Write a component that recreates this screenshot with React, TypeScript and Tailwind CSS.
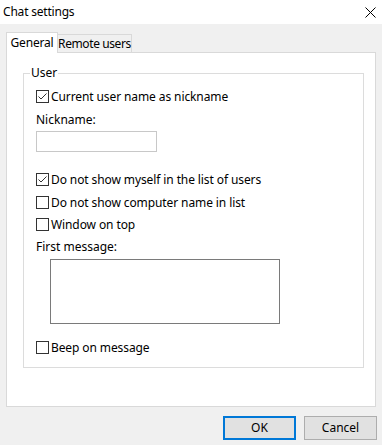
import React from "react";

const font = { fontFamily: '"Noto Sans", "Segoe UI", Arial, sans-serif' };

function Check({ checked, label, mt }: { checked?: boolean; label: string; mt: string }) {
  return (
    <div className={`flex items-center h-[13px] ${mt}`}>
      <div className="w-[13px] h-[13px] border border-[#333333] bg-white flex items-center justify-center shrink-0">
        {checked && (
          <svg width="11" height="11" viewBox="0 0 11 11">
            <polyline points="1.5,5.5 4,8 9.5,2.5" fill="none" stroke="#333333" strokeWidth="1" />
          </svg>
        )}
      </div>
      <span className="ml-[2px] text-[12px] leading-[13px] text-black whitespace-nowrap tracking-[-0.1px]">{label}</span>
    </div>
  );
}

export default function App() {
  return (
    <div className="w-[382px] h-[445px] bg-[#f0f0f0] flex flex-col overflow-hidden" style={font}>
      <div className="h-[24px] bg-white flex items-center justify-between pl-[3px] pr-[6px] shrink-0">
        <span className="text-[12px] text-black tracking-[-0.2px]">Chat settings</span>
        <svg width="11" height="11" viewBox="0 0 11 11">
          <path d="M0.5,0.5 L10.5,10.5 M10.5,0.5 L0.5,10.5" stroke="#000" strokeWidth="1" />
        </svg>
      </div>
      <div className="pl-[6px] pt-[8px] w-[376px]">
        <div className="flex items-end h-[20px] relative z-10">
          <div className="h-[21px] w-[52px] bg-white border border-b-0 border-[#d9d9d9] text-[12px] flex items-center justify-center -mb-[1px] whitespace-nowrap tracking-[-0.2px]">
            General
          </div>
          <div className="h-[18px] w-[74px] bg-[#f0f0f0] border border-l-0 border-b-0 border-[#d9d9d9] text-[12px] flex items-center justify-center whitespace-nowrap tracking-[-0.4px]">
            Remote users
          </div>
        </div>
        <div className="h-[355px] w-[370px] bg-white border border-[#d9d9d9] pt-[20px] pl-[16px]">
          <div className="relative w-[341px] h-[295px] border border-[#dcdcdc] pl-[12px] flex flex-col">
            <span className="absolute left-[6px] -top-[9px] bg-white px-[1px] text-[12px] leading-[16px]">User</span>
            <Check checked label="Current user name as nickname" mt="mt-[16px]" />
            <div className="mt-[9px] text-[12px] leading-[16px]">Nickname:</div>
            <div className="mt-[3px] w-[121px] h-[21px] border border-[#c8c8c8] bg-white" />
            <Check checked label="Do not show myself in the list of users" mt="mt-[21px]" />
            <Check label="Do not show computer name in list" mt="mt-[10px]" />
            <Check label="Window on top" mt="mt-[9px]" />
            <div className="mt-[8px] text-[12px] leading-[16px]">First message:</div>
            <div className="mt-[4px] ml-[14px] w-[230px] h-[65px] border border-[#7a7a7a] bg-white" />
            <Check label="Beep on message" mt="mt-[17px]" />
          </div>
        </div>
      </div>
      <div className="flex justify-end gap-[8px] pr-[5px] mt-[9px]">
        <button className="w-[73px] h-[24px] bg-[#e1e1e1] border-2 border-[#0078d7] text-[12px] text-black">OK</button>
        <button className="w-[73px] h-[24px] bg-[#e1e1e1] border border-[#adadad] text-[12px] text-black">Cancel</button>
      </div>
    </div>
  );
}
